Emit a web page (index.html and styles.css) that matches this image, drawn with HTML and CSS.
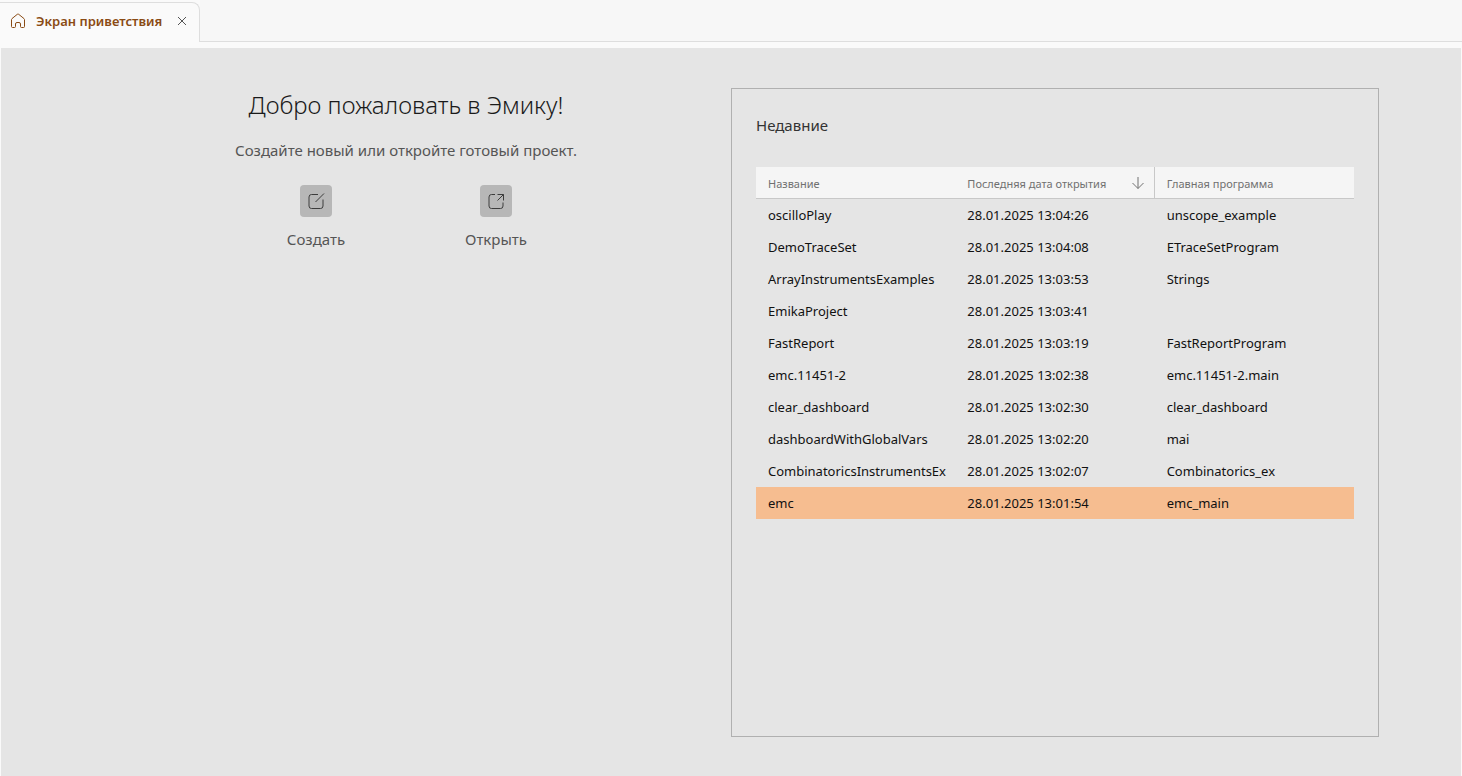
FILE: index.html
```html
<!DOCTYPE html>
<html lang="ru">
<head>
<meta charset="utf-8">
<title>Экран приветствия</title>
<link rel="stylesheet" href="styles.css">
</head>
<body>
<header class="tabs">
  <div class="tab">
    <svg class="tab-icon" viewBox="0 0 16 16" aria-hidden="true"><path d="M1.500 6.500Q1.500 6 2 5.600L7.300 1.300Q8 .8 8.700 1.300L14 5.600Q14.500 6 14.500 6.500V13.500a1 1 0 0 1-1 1H11.500a1 1 0 0 1-1-1V11A1.500 1.500 0 0 0 9 9.500H7A1.500 1.500 0 0 0 5.500 11v2.500a1 1 0 0 1-1 1h-2a1 1 0 0 1-1-1z"/></svg>
    <span class="tab-title">Экран приветствия</span>
    <button class="tab-close" type="button" aria-label="Закрыть"><svg viewBox="0 0 10 10"><path d="M1 1l8 8M9 1L1 9"/></svg></button>
  </div>
  <div class="tabs-rest"></div>
</header>
<main class="page">
  <section class="welcome">
    <h1 class="title">Добро пожаловать в Эмику!</h1>
    <p class="subtitle">Создайте новый или откройте готовый проект.</p>
    <div class="actions">
      <button class="action" type="button">
        <span class="action-box"><svg viewBox="0 0 18 18"><path d="M11 2.500H4.500a2.500 2.500 0 0 0-2.500 2.500v9a2.500 2.500 0 0 0 2.500 2.500h9a2.500 2.500 0 0 0 2.500-2.500V7.500M8.500 10l8.500-8.500"/></svg></span>
        <span>Создать</span>
      </button>
      <button class="action" type="button">
        <span class="action-box"><svg viewBox="0 0 18 18"><path d="M8 2.500H4.500a2.500 2.500 0 0 0-2.500 2.500v9a2.500 2.500 0 0 0 2.500 2.500h9a2.500 2.500 0 0 0 2.500-2.500v-3.500M10.500 2.500h6v6M16.500 2.500l-6 6"/></svg></span>
        <span>Открыть</span>
      </button>
    </div>
  </section>
  <section class="recent">
    <h2 class="recent-title">Недавние</h2>
    <table class="projects">
      <thead>
        <tr>
          <th>Название</th>
          <th class="sorted"><div class="sort">Последняя дата открытия <svg viewBox="0 0 12 12" aria-hidden="true"><path d="M6 0v11.500M.5 6L6 11.500 11.500 6"/></svg></div></th>
          <th>Главная программа</th>
        </tr>
      </thead>
      <tbody>
        <tr><td>oscilloPlay</td><td>28.01.2025 13:04:26</td><td>unscope_example</td></tr>
        <tr><td>DemoTraceSet</td><td>28.01.2025 13:04:08</td><td>ETraceSetProgram</td></tr>
        <tr><td>ArrayInstrumentsExamples</td><td>28.01.2025 13:03:53</td><td>Strings</td></tr>
        <tr><td>EmikaProject</td><td>28.01.2025 13:03:41</td><td></td></tr>
        <tr><td>FastReport</td><td>28.01.2025 13:03:19</td><td>FastReportProgram</td></tr>
        <tr><td>emc.11451-2</td><td>28.01.2025 13:02:38</td><td>emc.11451-2.main</td></tr>
        <tr><td>clear_dashboard</td><td>28.01.2025 13:02:30</td><td>clear_dashboard</td></tr>
        <tr><td>dashboardWithGlobalVars</td><td>28.01.2025 13:02:20</td><td>mai</td></tr>
        <tr><td>CombinatoricsInstrumentsEx</td><td>28.01.2025 13:02:07</td><td>Combinatorics_ex</td></tr>
        <tr class="selected"><td>emc</td><td>28.01.2025 13:01:54</td><td>emc_main</td></tr>
      </tbody>
    </table>
  </section>
</main>
</body>
</html>
```
FILE: styles.css
```css
* { box-sizing: border-box; }

body {
  margin: 0;
  min-height: 100vh;
  display: flex;
  flex-direction: column;
  background: #fafafa;
  font-family: "Segoe UI", "Noto Sans", sans-serif;
  font-size: 13px;
  color: #1a1a1a;
}

button {
  border: 0;
  padding: 0;
  background: none;
  font: inherit;
  color: inherit;
}

svg { fill: none; stroke: currentColor; display: block; }

.tabs { display: flex; height: 42px; }

.tab {
  display: flex;
  align-items: center;
  width: 200px;
  margin-top: 2px;
  padding: 0 12px 3px 10px;
  border: 1px solid #dedede;
  border-width: 1px 1px 0 0;
  border-radius: 0 8px 0 0;
  color: #8a4b14;
}

.tab-icon { width: 16px; height: 16px; margin-right: 10px; }
.tab-title { flex: 1; font-weight: 600; white-space: nowrap; }
.tab-close { color: #555; }
.tab-close svg { width: 10px; height: 10px; }

.tabs-rest {
  flex: 1;
  background: #f7f7f7;
  border-bottom: 1px solid #dedede;
}

.page {
  flex: 1;
  display: grid;
  grid-template-columns: 1fr 1fr;
  margin: 6px 1px 0;
  padding: 40px 82px 39px;
  background: #e5e5e5;
}

.welcome {
  display: flex;
  flex-direction: column;
  align-items: center;
  padding-right: 2px;
  font-size: 15px;
  color: #555;
}

.title {
  margin: 0;
  font-size: 24px;
  font-weight: 300;
  line-height: 34px;
  color: #1a1a1a;
}

.subtitle { margin: 17px 0 0; line-height: 22px; }

.actions { display: flex; gap: 80px; margin-top: 24px; }

.action {
  display: flex;
  flex-direction: column;
  align-items: center;
  gap: 11px;
  width: 100px;
  line-height: 22px;
}

.action-box {
  padding: 7px;
  border-radius: 4px;
  background: #b7b7b7;
  color: #3c3c3c;
}

.action-box svg { width: 18px; height: 18px; }

.recent { border: 1px solid #b0b0b0; padding: 24px; }

.recent-title {
  margin: 0 0 30px;
  font-size: 15px;
  font-weight: 400;
  line-height: 24px;
  color: #333;
}

.projects {
  width: 100%;
  table-layout: fixed;
  border-collapse: separate;
  border-spacing: 0;
  text-align: left;
  white-space: nowrap;
}

.projects th {
  height: 32px;
  padding: 1px 12px 0;
  background: #f5f5f5;
  border-bottom: 1px solid #c8c8c8;
  font-size: 11px;
  font-weight: 400;
  color: #707070;
}

.projects .sorted { padding-right: 10px; border-right: 1px solid #c8c8c8; }
.sort { display: flex; justify-content: space-between; align-items: center; }
.sort svg { width: 12px; height: 12px; }

.projects td { height: 32px; padding: 0 0 0 12px; color: #111; }
.projects .selected td { background: #f6bd90; }
```
